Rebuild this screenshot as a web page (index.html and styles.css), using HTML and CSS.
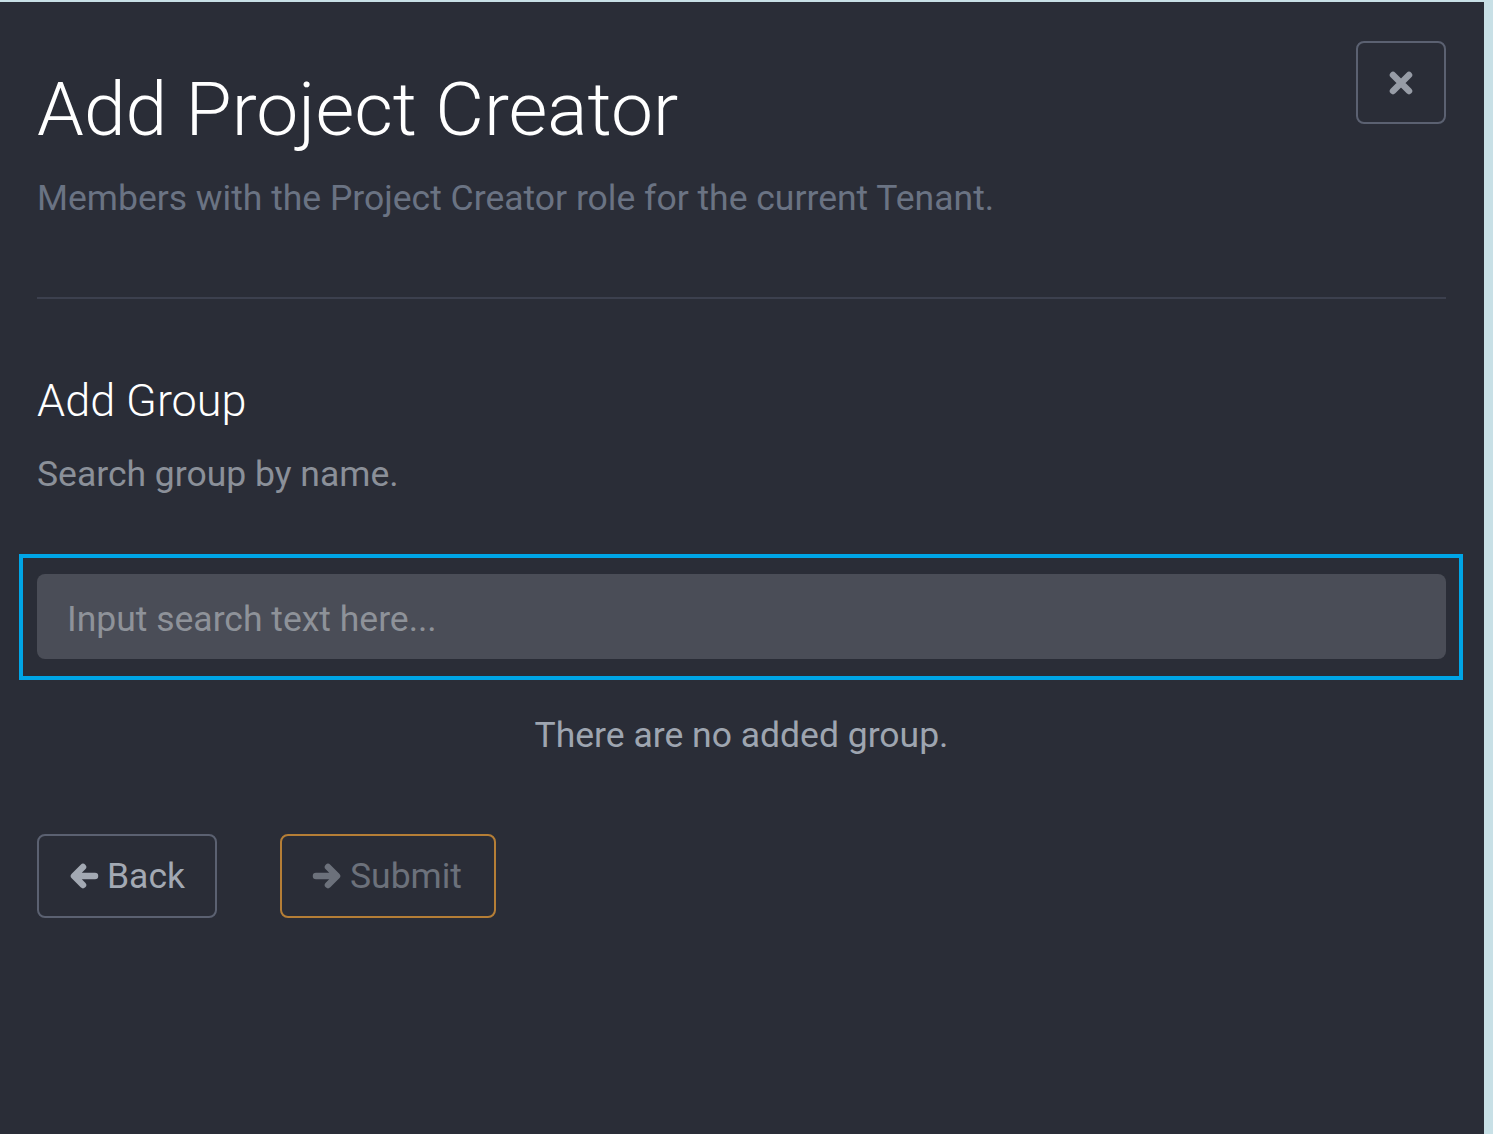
FILE: index.html
```html
<!DOCTYPE html>
<html lang="en">
<head>
  <meta charset="UTF-8">
  <title>Add Project Creator</title>
  <link rel="stylesheet" href="styles.css">
</head>
<body>
  <div class="panel">
    <div class="panel-header">
      <div class="titles">
        <h1>Add Project Creator</h1>
        <p class="subtitle">Members with the Project Creator role for the current Tenant.</p>
      </div>
      <button class="close-btn" aria-label="Close">
        <svg width="26" height="26" viewBox="0 0 26 26">
          <path d="M5 5 L21 21 M21 5 L5 21" stroke="#979ca6" stroke-width="6.5" stroke-linecap="round"/>
        </svg>
      </button>
    </div>

    <hr class="divider">

    <div class="section">
      <h2>Add Group</h2>
      <p class="hint">Search group by name.</p>
    </div>

    <div class="search-focus">
      <input class="search-input" type="text" placeholder="Input search text here...">
    </div>

    <p class="empty">There are no added group.</p>

    <div class="actions">
      <button class="btn btn-back">
        <svg width="30" height="28" viewBox="0 0 30 28">
          <path d="M26 14 H6 M14 5 L5 14 L14 23" fill="none" stroke="#a3a9b3" stroke-width="6.5" stroke-linecap="round" stroke-linejoin="round"/>
        </svg>
        Back
      </button>
      <button class="btn btn-submit">
        <svg width="30" height="28" viewBox="0 0 30 28">
          <path d="M4 14 H24 M16 5 L25 14 L16 23" fill="none" stroke="#6c717b" stroke-width="6.5" stroke-linecap="round" stroke-linejoin="round"/>
        </svg>
        Submit
      </button>
    </div>
  </div>
</body>
</html>
```

FILE: styles.css
```css
html, body {
  margin: 0;
  padding: 0;
}

body {
  background: #c8e0e6;
  font-family: Roboto, "Liberation Sans", sans-serif;
  padding-top: 2px;
}

.panel {
  width: 1484px;
  height: 1132px;
  box-sizing: border-box;
  background: #2a2d37;
  padding: 39px 38px 0 37px;
}

.panel-header {
  display: flex;
  justify-content: space-between;
  align-items: flex-start;
}

.panel-header h1 {
  margin: 23px 0 0 0;
  font-size: 75px;
  font-weight: 300;
  line-height: 90px;
  color: #ffffff;
}

.subtitle {
  margin: 23px 0 0 0;
  font-size: 35.5px;
  line-height: 42px;
  color: #6a7383;
}

.close-btn {
  width: 90px;
  height: 83px;
  background: transparent;
  border: 2px solid #5b6171;
  border-radius: 8px;
  display: flex;
  align-items: center;
  justify-content: center;
  padding: 0;
  cursor: pointer;
}

.divider {
  border: none;
  height: 2px;
  background: #3c404e;
  margin: 78px 0 0 0;
}

.section h2 {
  margin: 76px 0 0 0;
  font-size: 45px;
  font-weight: 300;
  line-height: 52px;
  color: #ffffff;
}

.hint {
  margin: 26px 0 0 0;
  font-size: 35.5px;
  line-height: 42px;
  color: #8b9099;
}

.search-focus {
  margin: 59px -17px 0 -18px;
  border: 4px solid #00a5e6;
  padding: 16px 13px 17px 14px;
}

.search-input {
  display: block;
  width: 100%;
  box-sizing: border-box;
  height: 85px;
  border: none;
  border-radius: 8px;
  background: #4a4d57;
  padding: 4px 30px 0 30px;
  font-family: Roboto, "Liberation Sans", sans-serif;
  font-size: 35.5px;
  color: #e0e0e0;
  outline: none;
}

.search-input::placeholder {
  color: #8e9299;
}

.empty {
  margin: 34px 0 0 0;
  text-align: center;
  font-size: 35.5px;
  line-height: 42px;
  color: #9ea5b0;
}

.actions {
  display: flex;
  gap: 63px;
  margin-top: 78px;
}

.btn {
  height: 84px;
  box-sizing: border-box;
  background: transparent;
  border: 2px solid #5b6171;
  border-radius: 8px;
  font-family: Roboto, "Liberation Sans", sans-serif;
  font-size: 35.5px;
  display: flex;
  align-items: center;
  gap: 8px;
  padding: 0 30px 0 30px;
  cursor: pointer;
}

.btn-back {
  width: 180px;
  color: #a3a9b3;
}

.btn-submit {
  width: 216px;
  border-color: #b57e36;
  color: #6c717b;
}
```
